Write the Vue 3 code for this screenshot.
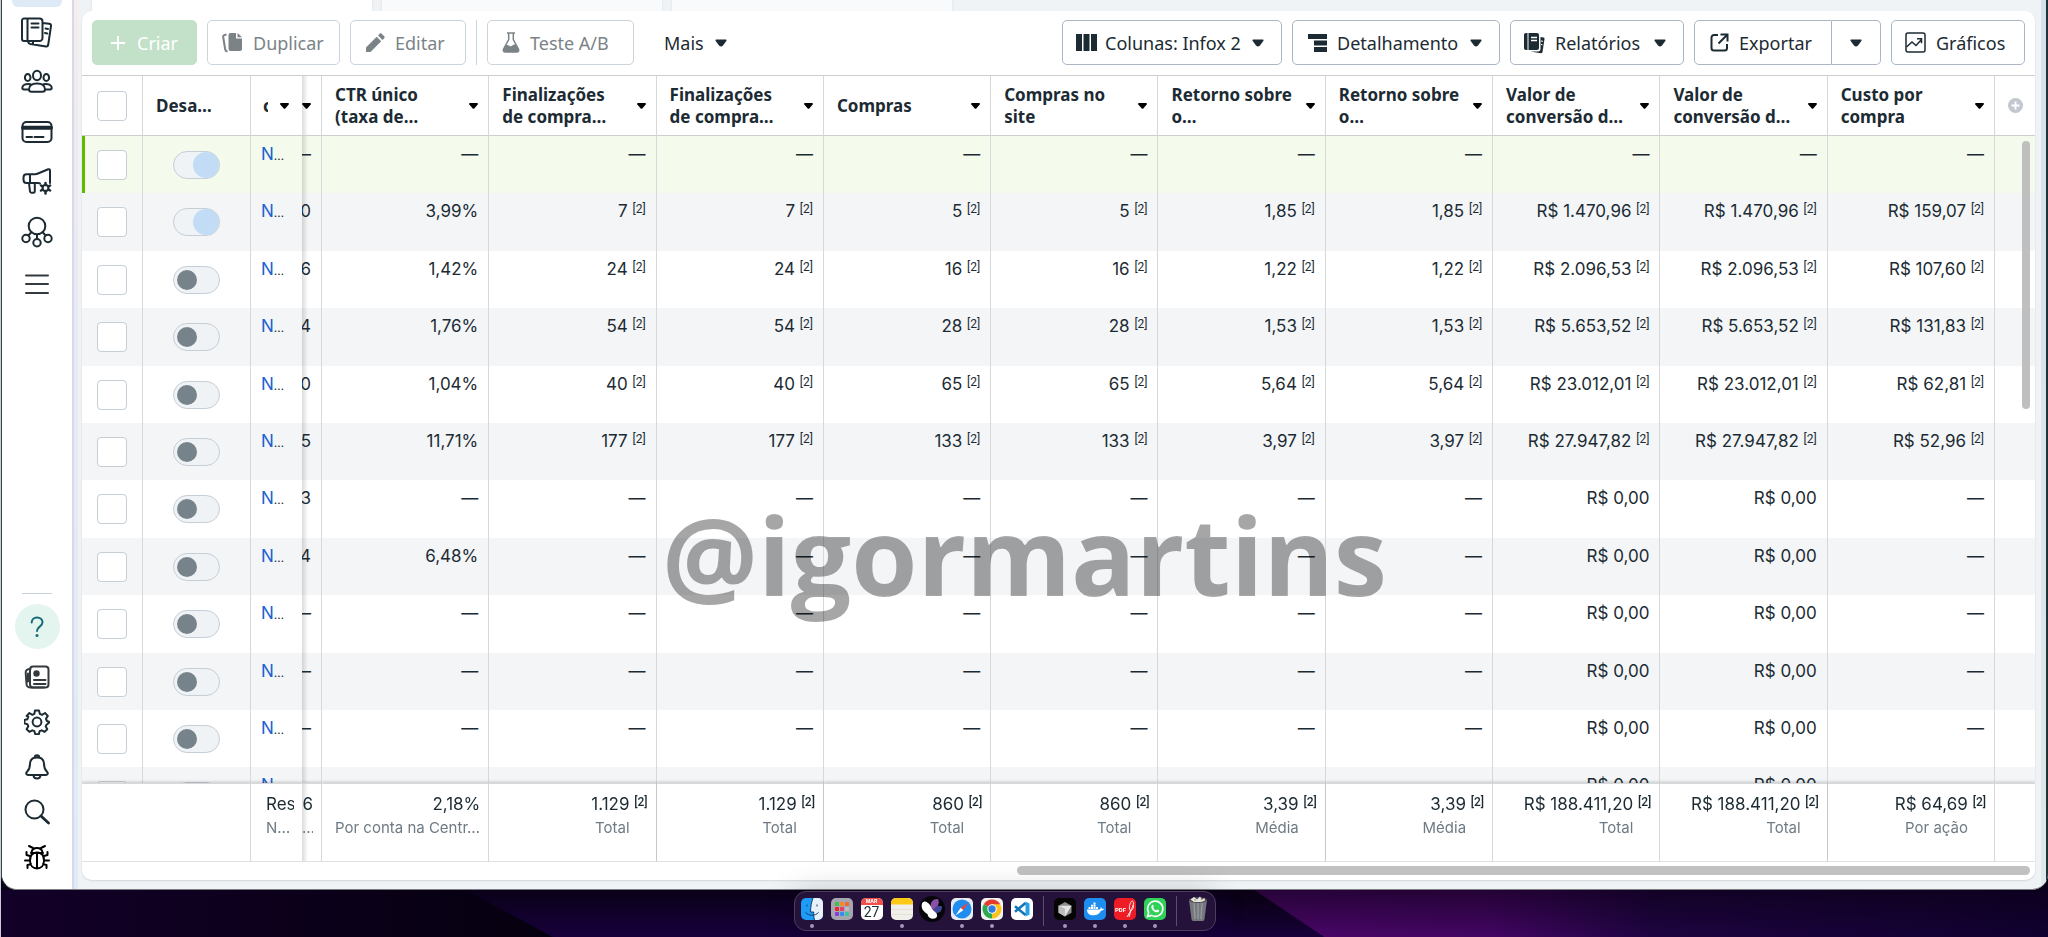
<script setup>
const headers = [
  'CTR único (taxa de…',
  'Finalizações de compra…',
  'Finalizações de compra…',
  'Compras',
  'Compras no site',
  'Retorno sobre o…',
  'Retorno sobre o…',
  'Valor de conversão d…',
  'Valor de conversão d…',
  'Custo por compra',
]

const D = '—'
const row = (on, part, ctr, checkouts, purchases, roas, value, cost) => ({
  on,
  part,
  cells: [ctr, checkouts, checkouts, purchases, purchases, roas, roas, value, value, cost].map(
    (text, i) => ({ text, note: i > 0 && text !== D && text !== 'R$ 0,00' }),
  ),
})

const rows = [
  row(true, D, D, D, D, D, D, D),
  row(true, '0', '3,99%', '7', '5', '1,85', 'R$ 1.470,96', 'R$ 159,07'),
  row(false, '6', '1,42%', '24', '16', '1,22', 'R$ 2.096,53', 'R$ 107,60'),
  row(false, '4', '1,76%', '54', '28', '1,53', 'R$ 5.653,52', 'R$ 131,83'),
  row(false, '0', '1,04%', '40', '65', '5,64', 'R$ 23.012,01', 'R$ 62,81'),
  row(false, '5', '11,71%', '177', '133', '3,97', 'R$ 27.947,82', 'R$ 52,96'),
  row(false, '3', D, D, D, D, 'R$ 0,00', D),
  row(false, '4', '6,48%', D, D, D, 'R$ 0,00', D),
  row(false, D, D, D, D, D, 'R$ 0,00', D),
  row(false, D, D, D, D, D, 'R$ 0,00', D),
  row(false, D, D, D, D, D, 'R$ 0,00', D),
  row(false, D, D, D, D, D, 'R$ 0,00', D),
]

const totals = [
  { text: '1.129', sub: 'Total' },
  { text: '1.129', sub: 'Total' },
  { text: '860', sub: 'Total' },
  { text: '860', sub: 'Total' },
  { text: '3,39', sub: 'Média' },
  { text: '3,39', sub: 'Média' },
  { text: 'R$ 188.411,20', sub: 'Total' },
  { text: 'R$ 188.411,20', sub: 'Total' },
  { text: 'R$ 64,69', sub: 'Por ação' },
]

const padColors = ['#3fbf4a', '#f58a1f', '#f5672a', '#e8262b', '#e83b6b', '#b9bcc2', '#8a3bd6', '#2f8ff0', '#35c6a5']
</script>

<template>
  <div class="desktop">
    <div class="window">
      <aside class="rail">
        <div class="rail-current"></div>
        <nav class="rail-group" aria-label="Atalhos">
          <a href="#" class="rail-link" aria-label="Relatórios">
            <svg width="32" height="32" viewBox="0 0 32 32" class="line">
              <path d="M3 2.500h15.500a3 3 0 0 1 3 3V22a3 3 0 0 1-3 3H3a2 2 0 0 1-2-2V4.500a2 2 0 0 1 2-2zM6.500 2.500V25M10.500 7.500h7M10.500 11.500h7M7 25.500c.3 1.800 1 2.300 2.500 2.600L25 30.500c1.300.2 2-.6 2.200-1.700L30 10c.2-1.300-.5-2-1.800-2.200L22 7M24.500 12.500l2.500.4M24 17l2.300.4M12 25.500v3" />
            </svg>
          </a>
          <a href="#" class="rail-link" aria-label="Públicos">
            <svg width="32" height="32" viewBox="0 0 32 32" class="line">
              <ellipse cx="16" cy="9.500" rx="4" ry="4.800" />
              <ellipse cx="6.700" cy="11.500" rx="2.800" ry="3.500" />
              <ellipse cx="25.300" cy="11.500" rx="2.800" ry="3.500" />
              <path d="M8 23.500c0-4 3.500-6 8-6s8 2 8 6c0 1.500-1 2.200-2.500 2.200h-11C9 25.700 8 25 8 23.500zM9.500 18.200C4.500 17.500 1.300 19 1.300 21.800c0 1.200.8 1.700 1.700 1.700h5M22.500 18.200c5-.7 8.200.8 8.200 3.600 0 1.200-.8 1.700-1.700 1.700h-5" />
            </svg>
          </a>
          <a href="#" class="rail-link" aria-label="Cobrança">
            <svg width="32" height="32" viewBox="0 0 32 32" class="line">
              <rect x="1.500" y="6" width="29" height="20" rx="4" />
              <path d="M2 11.800h28" stroke-width="4" />
              <path d="M5.500 21h5.500M13.500 21h9" />
            </svg>
          </a>
          <a href="#" class="rail-link" aria-label="Configurações de anúncios">
            <svg width="32" height="32" viewBox="0 0 32 32" class="line">
              <path d="M29 17V4.500c0-1-.8-1.600-1.800-1.200L17 7.500C16 8 15 8.200 14 8.200H5.500c-2 0-3 1.500-3 3.300v2c0 2 1 3.500 3 3.500H9v-8.500M9 17h8l2 .5M8 17l1 8.500c.1.800.6 1.200 1.400 1.200h2c1 0 1.400-.6 1.400-1.500V17" />
              <path d="M24.500 17v2M24.500 25v2.500M20 19.500l1.700 1M27.300 23.500l1.800 1M20 24.500l1.700-1M27.300 20.500l1.800-1" stroke-width="2.500" />
              <circle cx="24.500" cy="22" r="3" />
            </svg>
          </a>
          <a href="#" class="rail-link" aria-label="Conexões">
            <svg width="32" height="32" viewBox="0 0 32 32" class="line">
              <circle cx="16" cy="10" r="8.300" />
              <circle cx="5" cy="22.500" r="3.700" />
              <circle cx="27" cy="22.500" r="3.700" />
              <circle cx="16" cy="26.800" r="3.700" />
              <path d="M16 18.500v4.500M10.500 16l-3 3.500M21.500 16l3 3.500" />
            </svg>
          </a>
          <a href="#" class="rail-link menu" aria-label="Todas as ferramentas">
            <svg width="32" height="32" viewBox="0 0 32 32" class="line soft">
              <path d="M5 7.500h22M5 16h22M5 25h22" />
            </svg>
          </a>
        </nav>
        <nav class="rail-group low" aria-label="Ajuda e configurações">
          <a href="#" class="help" aria-label="Ajuda">
            <svg width="24" height="24" viewBox="0 0 24 24" fill="none" stroke="#176b76" stroke-width="2">
              <path d="M6.700 7.500c0-3 2.200-5 5.300-5s5.500 2 5.500 4.800c0 4.500-5.500 4.200-5.500 8.700" stroke-linecap="round" />
              <circle cx="12" cy="20.500" r="1.500" fill="#176b76" stroke="none" />
            </svg>
          </a>
          <a href="#" class="rail-link small" aria-label="Novidades">
            <svg width="26" height="26" viewBox="0 0 26 26" class="line soft">
              <rect x="6" y="2.500" width="18.500" height="21" rx="3" />
              <path d="M6.500 5C3 5 1.500 6.500 1.700 9l.8 11c.2 2.300 1.500 3.500 4 3.500H20M4 9.500v8" />
              <path d="M10 16h11.500M10 20h11.500" />
              <circle cx="12.500" cy="9.500" r="3.200" fill="#333b40" stroke="none" />
            </svg>
          </a>
          <a href="#" class="rail-link small" aria-label="Configurações">
            <svg width="26" height="26" viewBox="0 0 26 26" class="line">
              <circle cx="13" cy="13" r="4.400" />
              <path d="M11 1.500h4l.8 3.300 2.200 1 3-1.800 2.800 2.900-1.800 2.900.9 2.200L25 12.800v.9l-2.500 2-.8 1.500 1.600 3-2.700 2.700-2.900-1.600-2.100.9-.8 3h-3.500l-.9-3-2.100-.9-2.900 1.600-2.800-2.700 1.700-3-.9-2-3-.8v-3.400l3-.8.9-2.300L2.700 6.900 5.400 4l3 1.800 2-1z" />
            </svg>
          </a>
          <a href="#" class="rail-link small" aria-label="Notificações">
            <svg width="26" height="26" viewBox="0 0 26 26" class="line">
              <path d="M10.800 3.500c0-3 4.400-3 4.400 0 3.300 1 4.800 3.500 4.800 6.500 0 4 .7 5.500 3 7.700 1.500 1.500.8 3.300-1.300 3.300H4.300c-2.100 0-2.800-1.800-1.300-3.300C5.300 15.500 6 14 6 10c0-3 1.500-5.500 4.800-6.500zM9.500 21.500c.3 4 6.700 4 7 0M10.800 3.800c1.400-.5 3-.5 4.400 0" />
            </svg>
          </a>
          <a href="#" class="rail-link small" aria-label="Pesquisar">
            <svg width="26" height="26" viewBox="0 0 26 26" class="line">
              <circle cx="10.500" cy="10.500" r="9" />
              <path d="M17 17l7.500 7" stroke-width="2.800" />
            </svg>
          </a>
          <a href="#" class="rail-link small" aria-label="Relatar um problema">
            <svg width="26" height="26" viewBox="0 0 26 26" class="line bug">
              <path d="M13 8.500c4.500 0 7 3 7 8s-3 8-7 8-7-3-7-8 2.500-8 7-8zM13 8.500v16M7.500 8.500c.5-3.500 2.500-4.500 5.500-4.500s5 1 5.500 4.500M7 9h12M9 4L5 2M17 4l4-2M6 12L2.500 11V8M20 12l3.500-1V8M6 16.500H1M20 16.500h5M7 20l-3.500 1v3M19 20l3.500 1v3" />
            </svg>
          </a>
        </nav>
      </aside>
      <div class="edge"></div>

      <main class="content">
        <div class="tabs">
          <div class="tab current"></div>
          <div class="tab"></div>
          <div class="tab"></div>
        </div>

        <section class="panel">
          <div class="toolbar">
            <div class="tools">
              <button type="button" class="btn create">
                <svg width="14" height="14" viewBox="0 0 14 14"><path d="M7 0v14M0 7h14" stroke="#fff" stroke-width="2" /></svg>
                Criar
              </button>
              <button type="button" class="btn faded duplicate">
                <svg width="21" height="21" viewBox="0 0 21 21">
                  <path d="M8.500 1H14v5.500h6V17a2 2 0 0 1-2 2H8.500a2 2 0 0 1-2-2V3a2 2 0 0 1 2-2z" fill="#7b8387" />
                  <path d="M15.500 1L20 5.200h-4.500z" fill="#7b8387" />
                  <path d="M4.500 2.500L2.500 3c-1 .3-1.500 1-1.300 2l2 12.500c.2 1.300.8 1.800 2.300 2" fill="none" stroke="#7b8387" stroke-width="2" />
                </svg>
                Duplicar
              </button>
              <button type="button" class="btn faded edit">
                <svg width="20" height="20" viewBox="0 0 20 20">
                  <path d="M1 14.500L11.700 3.800l4.500 4.500L5.500 19H1zM13 2.500l1.700-1.700c.7-.6 1.300-.6 2 0l2.500 2.500c.6.700.6 1.300 0 2L17.500 7z" fill="#7b8387" />
                </svg>
                Editar
              </button>
              <span class="rule"></span>
              <button type="button" class="btn faded test">
                <svg width="18" height="21" viewBox="0 0 18 21">
                  <path d="M5 1h8M6.700 1v6.500L1.600 17c-.7 1.500 0 3 1.700 3h11.400c1.700 0 2.400-1.500 1.700-3L11.300 7.500V1" fill="none" stroke="#7b8387" stroke-width="1.500" />
                  <path d="M3.500 13.500c3-1.500 4 1.500 6 .5s3-2 4.500-1.500l2.500 5c.5 1.500-.3 2.500-1.700 2.500H3.200c-1.400 0-2.200-1-1.700-2.500z" fill="#7b8387" />
                </svg>
                Teste A/B
              </button>
              <button type="button" class="btn plain">
                Mais
                <svg class="caret" width="12" height="8" viewBox="0 0 12 8"><path d="M1.200.5h9.600q1.200 0 .5 1.400L8 6.500Q6 8.300 4 6.500L.7 1.900Q0 .5 1.200.5z" /></svg>
              </button>
            </div>
            <div class="tools">
              <button type="button" class="btn columns">
                <svg width="21" height="17" viewBox="0 0 21 17" fill="#1c2b33">
                  <rect x="0" y="0" width="6" height="17" /><rect x="7.500" y="0" width="6" height="17" /><rect x="15" y="0" width="6" height="17" />
                </svg>
                Colunas: Infox 2
                <svg class="caret" width="12" height="8" viewBox="0 0 12 8"><path d="M1.200.5h9.600q1.200 0 .5 1.400L8 6.500Q6 8.300 4 6.500L.7 1.900Q0 .5 1.200.5z" /></svg>
              </button>
              <button type="button" class="btn breakdown">
                <svg width="19" height="18" viewBox="0 0 19 18" fill="#1c2b33">
                  <rect x="0" y="0" width="19" height="5" /><rect x="6" y="6.500" width="13" height="5" /><rect x="6" y="13" width="13" height="5" />
                </svg>
                Detalhamento
                <svg class="caret" width="12" height="8" viewBox="0 0 12 8"><path d="M1.200.5h9.600q1.200 0 .5 1.400L8 6.500Q6 8.300 4 6.500L.7 1.900Q0 .5 1.200.5z" /></svg>
              </button>
              <button type="button" class="btn reports">
                <svg width="21" height="22" viewBox="0 0 21 22" fill="#1c2b33">
                  <path d="M2 1h1.500v17H2c-1.300 0-2-.8-2-2V3c0-1.200.7-2 2-2zM4.500 1H13a2 2 0 0 1 2 2v13a2 2 0 0 1-2 2H4.500zM16.500 5l3 .5c.8.200 1.200.8 1 1.600l-2 13c-.1.800-.8 1.300-1.700 1.100L6.500 19.500H14c1.600 0 2.500-1 2.500-2.500z" />
                  <path d="M7 5.500h6M7 8.500h6" stroke="#fff" stroke-width="1.300" />
                  <path d="M17 9l2 .3M17 12.500l1.500.3" stroke="#fff" stroke-width="1" />
                </svg>
                Relatórios
                <svg class="caret" width="12" height="8" viewBox="0 0 12 8"><path d="M1.200.5h9.600q1.200 0 .5 1.400L8 6.500Q6 8.300 4 6.500L.7 1.900Q0 .5 1.200.5z" /></svg>
              </button>
              <div class="split">
                <button type="button" class="btn export">
                  <svg width="19" height="19" viewBox="0 0 19 19" fill="none" stroke="#1c2b33" stroke-width="2">
                    <path d="M8 2H4a2.500 2.500 0 0 0-2.500 2.500V15A2.500 2.500 0 0 0 4 17.500h10.500A2.500 2.500 0 0 0 17 15v-4M10.500 1.500H17.500V8.500M17 2L8.500 10.500" />
                  </svg>
                  Exportar
                </button>
                <button type="button" class="btn more" aria-label="Mais opções de exportação">
                  <svg class="caret" width="12" height="8" viewBox="0 0 12 8"><path d="M1.200.5h9.600q1.200 0 .5 1.400L8 6.500Q6 8.300 4 6.500L.7 1.900Q0 .5 1.200.5z" /></svg>
                </button>
              </div>
              <button type="button" class="btn chart">
                <svg width="21" height="21" viewBox="0 0 21 21" fill="none" stroke="#1c2b33" stroke-width="1.500">
                  <rect x="1" y="1" width="19" height="19" rx="2" />
                  <path d="M1.500 15l5.500-5 4 3.500 5.500-6M12 6.700h4.500v4.500" />
                </svg>
                Gráficos
              </button>
            </div>
          </div>

          <div class="viewport">
            <table class="grid">
              <colgroup>
                <col class="w-check" /><col class="w-switch" /><col class="w-name" /><col class="w-part" />
                <col v-for="(h, i) in headers" :key="i" />
                <col class="w-add" />
              </colgroup>
              <thead>
                <tr>
                  <th class="center"><input type="checkbox" class="check" aria-label="Selecionar tudo" /></th>
                  <th class="state">Desa…</th>
                  <th class="name-head">
                    <div><span>c</span><button type="button" class="sort" aria-label="Ordenar por nome"><svg width="9" height="6" viewBox="0 0 9 6"><path d="M.7 0h7.600q1 .6.4 1.400L5.500 5.300q-1 1-2 0L.3 1.400Q-.3.600.7 0z" /></svg></button></div>
                  </th>
                  <th class="part-head">
                    <button type="button" class="sort" aria-label="Ordenar"><svg width="9" height="6" viewBox="0 0 9 6"><path d="M.7 0h7.600q1 .6.4 1.400L5.500 5.300q-1 1-2 0L.3 1.400Q-.3.600.7 0z" /></svg></button>
                  </th>
                  <th v-for="(h, i) in headers" :key="i">
                    <div class="head">
                      <span>{{ h }}</span>
                      <button type="button" class="sort" :aria-label="'Ordenar por ' + h"><svg width="9" height="6" viewBox="0 0 9 6"><path d="M.7 0h7.600q1 .6.4 1.400L5.500 5.300q-1 1-2 0L.3 1.400Q-.3.600.7 0z" /></svg></button>
                    </div>
                  </th>
                  <th class="center">
                    <button type="button" class="sort" aria-label="Adicionar coluna">
                      <svg width="15" height="15" viewBox="0 0 15 15"><circle cx="7.500" cy="7.500" r="7.500" fill="#c3c7cf" /><path d="M7.500 3.500v8M3.500 7.500h8" stroke="#fff" stroke-width="1.800" /></svg>
                    </button>
                  </th>
                </tr>
              </thead>
              <tbody>
                <tr v-for="(r, n) in rows" :key="n">
                  <td class="center"><input type="checkbox" class="check" :aria-label="'Selecionar linha ' + (n + 1)" /></td>
                  <td class="center"><input type="checkbox" role="switch" class="switch" :checked="r.on" :aria-label="'Ativar linha ' + (n + 1)" /></td>
                  <td class="name"><a href="#">N</a><span>…</span></td>
                  <td class="part"><div>{{ r.part }}</div></td>
                  <td v-for="(c, i) in r.cells" :key="i" class="num">{{ c.text }} <sup v-if="c.note">[2]</sup></td>
                  <td></td>
                </tr>
              </tbody>
              <tfoot>
                <tr>
                  <td colspan="2"></td>
                  <td class="sum-name"><div>Resultados</div><small>N…</small></td>
                  <td class="sum-part"><div>6</div><small>…</small></td>
                  <td class="sum ctr"><div>2,18%</div><small>Por conta na Centr…</small></td>
                  <td v-for="(t, i) in totals" :key="i" class="sum"><div>{{ t.text }} <sup>[2]</sup></div><small>{{ t.sub }}</small></td>
                  <td></td>
                </tr>
              </tfoot>
            </table>
            <div class="thumb-y"></div>
          </div>
          <div class="track-x"><div class="thumb-x"></div></div>
        </section>
      </main>
      <div class="far-edge"></div>
    </div>

    <div class="wallpaper">
      <svg class="aurora" viewBox="0 0 2048 47" preserveAspectRatio="none" aria-hidden="true">
        <defs>
          <linearGradient id="night" x1="0" y1="0" x2="0" y2="1"><stop offset="0" stop-color="#0a0118" /><stop offset="1" stop-color="#17003c" /></linearGradient>
          <linearGradient id="dusk" x1="0" y1="0" x2="1" y2="0"><stop offset="0" stop-color="#130028" /><stop offset="1" stop-color="#05000f" /></linearGradient>
          <linearGradient id="glow" x1="0" y1="0" x2="1" y2="0"><stop offset="0" stop-color="#4b0669" /><stop offset=".3" stop-color="#430563" /><stop offset=".5" stop-color="#1e0441" /><stop offset="1" stop-color="#100030" /></linearGradient>
          <linearGradient id="shade" x1="0" y1="0" x2="0" y2="1"><stop offset="0" stop-color="#0a0010" stop-opacity=".55" /><stop offset="1" stop-color="#0a0010" stop-opacity="0" /></linearGradient>
        </defs>
        <rect width="2048" height="47" fill="url(#night)" />
        <path d="M0 0h465l87 47H0z" fill="url(#dusk)" />
        <path d="M1254 0h794v47H1324z" fill="url(#glow)" />
        <rect x="1230" width="818" height="47" fill="url(#shade)" />
      </svg>
      <div class="dock">
        <div class="app running">
          <svg width="22" height="22" viewBox="0 0 22 22"><rect width="22" height="22" rx="5" fill="#1d9bf6" /><path d="M12 0h5a5 5 0 0 1 5 5v12a5 5 0 0 1-5 5h-3.500c-.8-3-1-5.500-.8-8H9.500C9.700 8 10.500 4 12 0z" fill="#e8f0f8" /><path d="M6 6.500v2M16 6.500v2M4.500 14.500c3.500 3.700 9.500 3.700 13 0M12 0c-1.500 4-2.300 8-2.500 14h3.200c-.2 2.500 0 5 .8 8" fill="none" stroke="#12436f" stroke-width="1" /></svg>
        </div>
        <div class="app">
          <svg width="22" height="22" viewBox="0 0 22 22"><rect width="22" height="22" rx="5" fill="#a7a6b0" /><rect v-for="(c, i) in padColors" :key="i" :x="4 + (i % 3) * 5" :y="4 + Math.floor(i / 3) * 5" width="4" height="4" rx="1" :fill="c" /></svg>
        </div>
        <div class="app">
          <div class="calendar"><span>MAR</span><b>27</b></div>
        </div>
        <div class="app running">
          <svg width="22" height="22" viewBox="0 0 22 22"><rect width="22" height="22" rx="5" fill="#f1efe9" /><path d="M0 6.500V5a5 5 0 0 1 5-5h12a5 5 0 0 1 5 5v1.500z" fill="#fcc916" /><path d="M0 11.500h22M0 16.500h22" stroke="#dcdad2" stroke-width=".7" /></svg>
        </div>
        <div class="app">
          <svg width="26" height="26" viewBox="0 0 26 26"><circle cx="13" cy="13" r="13" fill="#06060a" /><path d="M12.500 13C10 7 13.500 2.500 19 3c2 4.500 0 8.500-5.500 11z" fill="#8a4fa6" /><path d="M14 16.500c0-4.500 4-7.500 9-6 .5 4.500-3.500 8-9 6z" fill="#41469a" /><path d="M3 7.500C6 2.500 11 7.500 13.200 13.200 15 15.500 19 17 18 20.500c-1.500 3.500-9 3-9.500-2.500C5 16 1.500 12.500 3 7.500z" fill="#fff" /></svg>
        </div>
        <div class="app running">
          <svg width="22" height="22" viewBox="0 0 22 22"><rect width="22" height="22" rx="5" fill="#e9edf1" /><circle cx="11" cy="11" r="9.500" fill="#1f8df0" /><path d="M17.500 4.500L12.300 12.300 9.700 9.700z" fill="#f04438" /><path d="M4.500 17.500l5.200-7.800 2.600 2.600z" fill="#fff" /></svg>
        </div>
        <div class="app running">
          <svg width="22" height="22" viewBox="0 0 22 22"><rect width="22" height="22" rx="5" fill="#f3f3f3" /><path d="M11 11L2.800 6.300A9.400 9.400 0 0 1 19.200 6.300z" fill="#e33b2e" /><path d="M11 11L2.800 6.300a9.400 9.400 0 0 0 8.200 14.100z" fill="#2da94f" /><path d="M11 11h0l0 9.400A9.400 9.400 0 0 0 19.200 6.300H11z" fill="#fcc31e" /><circle cx="11" cy="11" r="4.700" fill="#fff" /><circle cx="11" cy="11" r="3.700" fill="#2f7de1" /></svg>
        </div>
        <div class="app">
          <svg width="22" height="22" viewBox="0 0 22 22"><rect width="22" height="22" rx="5" fill="#fff" /><path d="M14.500 3.500l4 2v11l-4 2z" fill="#27a0e8" /><path d="M14.500 5L4 13.700M14.500 17L4 8.300" stroke="#1274b8" stroke-width="2.500" /></svg>
        </div>
        <span class="dock-rule"></span>
        <div class="app running">
          <svg width="22" height="22" viewBox="0 0 22 22"><rect width="22" height="22" rx="5" fill="#050505" /><path d="M11 4l6.500 3.700v7L11 18.500l-6.500-3.800v-7z" fill="#8d8d8d" /><path d="M4.500 7.700h13L11 18.500V11z" fill="#e5e5e5" /><path d="M4.500 7.700L11 11v7.500l-6.500-3.800z" fill="#bdbdbd" /></svg>
        </div>
        <div class="app running">
          <svg width="22" height="22" viewBox="0 0 22 22"><rect width="22" height="22" rx="5" fill="#1d8df0" /><path d="M3 11.500h12.500c1-.1 1.300-1 1-2.500 1 .5 1.300 1 1.500 1.700.8-.1 1.300 0 2 .3-.5 1.200-1.500 1.700-3 1.700-1.500 3.300-4 4.600-7.500 4.600-4.300 0-6.500-2-6.500-5.800zM4.500 9h2v2h-2zM7 9h2v2H7zM9.500 9h2v2h-2zM12 9h2v2h-2zM7 6.700h2v2H7zM9.500 6.700h2v2h-2zM9.500 4.500h2v2h-2z" fill="#fff" /></svg>
        </div>
        <div class="app running">
          <div class="pdf">PDF<svg width="8" height="18" viewBox="0 0 8 18"><path d="M1 17C4 12 9 4 7 1.500S2 8 4 10s4-3 3.500-5M3 17l2-7" fill="none" stroke="#fff" stroke-width=".9" /></svg></div>
        </div>
        <div class="app running">
          <svg width="22" height="22" viewBox="0 0 22 22"><rect width="22" height="22" rx="5" fill="#2fd158" /><path d="M3.500 18.500l1.100-4A7.600 7.600 0 1 1 7.500 17.400z" fill="none" stroke="#fff" stroke-width="1.600" /><path d="M8 7.200c.8-.8 1.300-.3 1.700 1 .3.800-.8 1-.4 1.700.7 1.200 1.500 1.900 2.700 2.400.7.300.9-1 1.600-.8 1.500.6 1.900 1 1.300 1.900-1 1.300-2.700 1.200-4.700 0C8 12 6.500 9 8 7.200z" fill="#fff" /></svg>
        </div>
        <span class="dock-rule"></span>
        <div class="app">
          <svg width="20" height="26" viewBox="0 0 20 26"><path d="M1 4h18l-2.500 19c-.2 1.500-1 2-2.500 2H6c-1.500 0-2.300-.5-2.500-2z" fill="#74787c" /><path d="M6 7l1 16M10 7v16M14 7l-1 16" stroke="#989ca0" stroke-width="1.300" /><ellipse cx="10" cy="4" rx="9" ry="3" fill="#4c4f53" /><path d="M2.500 3.500L6 1l3 2.500L12 .5l2 3 2.500-1.500.5 2.500-4 1.500H6z" fill="#e6e6e6" /><path d="M6 3.500l2 1M12.500 4l2-1" stroke="#d98a3a" /></svg>
        </div>
      </div>
    </div>
    <div class="watermark">@igormartins</div>
  </div>
</template>

<style>
body {
  margin: 0;
  overflow: hidden;
}
</style>

<style scoped>
* {
  box-sizing: border-box;
}
.desktop {
  position: relative;
  display: flex;
  flex-direction: column;
  height: 100vh;
  background: #0a0118;
  color: #1c2b33;
  font-family: Inter, Roboto, sans-serif;
  font-size: 17px;
  border-left: 1px solid #c9cdd1;
}
svg {
  display: block;
  flex: none;
}
.window {
  display: flex;
  flex: 1;
  min-height: 0;
  border-left: 1px solid #38444c;
  border-bottom: 1px solid #7c7f82;
  border-radius: 0 0 16px 16px;
  overflow: hidden;
  background: #eff3f6;
}
.rail {
  display: flex;
  flex-direction: column;
  align-items: center;
  width: 70px;
  flex: none;
  background: #fff;
  padding-bottom: 10px;
}
.rail-current {
  width: 50px;
  height: 7px;
  border-radius: 0 0 6px 6px;
  background: #deebf7;
}
.rail-group {
  display: flex;
  flex-direction: column;
  align-items: center;
}
.rail-link {
  display: grid;
  place-items: center;
  width: 50px;
  height: 50px;
}
.rail-link.menu {
  height: 54px;
}
.rail-link.small {
  height: 45px;
}
.low {
  margin-top: auto;
  border-top: 1px solid #c5d0db;
  padding-top: 10px;
  width: 30px;
}
.help {
  display: grid;
  place-items: center;
  width: 45px;
  height: 45px;
  margin-bottom: 5px;
  border-radius: 50%;
  background: #e4f4ef;
}
.line {
  fill: none;
  stroke: #1c2b33;
  stroke-width: 2;
  stroke-linecap: round;
  stroke-linejoin: round;
}
.line.soft {
  stroke: #333b40;
}
.line.bug {
  stroke: #000;
}
.edge {
  width: 6px;
  flex: none;
  border-left: 2px solid #d3dbe6;
  background: linear-gradient(#f8ebeb, #ebe8f4 30%, #e0ebf7);
}
.far-edge {
  width: 7px;
  flex: none;
  border-right: 2px solid #1f333b;
  background: linear-gradient(#d5e1ea, #dce9e8);
}
.content {
  display: flex;
  flex-direction: column;
  flex: 1;
  min-width: 0;
  padding: 0 6px 9px 4px;
}
.tabs {
  display: flex;
  gap: 10px;
  height: 11px;
  flex: none;
  padding-left: 10px;
}
.tab {
  width: 280px;
  background: #f9fafc;
  box-shadow: 0 0 3px rgba(0, 0, 0, .08);
}
.tab.current {
  background: #fff;
}
.panel {
  position: relative;
  display: flex;
  flex-direction: column;
  flex: 1;
  min-height: 0;
  background: #fff;
  border-radius: 10px;
  box-shadow: 0 1px 2px rgba(0, 0, 0, .12);
}
.toolbar {
  display: flex;
  justify-content: space-between;
  padding: 9px 10px 10px;
  border-bottom: 1px solid #cccfd2;
  font-family: "Noto Sans", "Open Sans", sans-serif;
}
.tools {
  display: flex;
  gap: 10px;
}
.btn {
  display: flex;
  align-items: center;
  gap: 10px;
  height: 45px;
  padding: 0 17px 0 13px;
  border: 1px solid #a9b6c4;
  border-radius: 5px;
  background: #fff;
  color: #1c2b33;
  font-family: inherit;
  font-size: 18px;
  white-space: nowrap;
}
.caret {
  margin-left: auto;
  fill: #1c2b33;
}
.btn.faded {
  padding: 0 0 0 14px;
  border-color: #cbd3db;
  color: #7b8387;
}
.btn.create {
  gap: 12px;
  width: 105px;
  padding: 0 0 0 18px;
  border-color: #c3e1c9;
  background: #c3e1c9;
  color: #fff;
}
.btn.duplicate {
  width: 133px;
}
.btn.edit {
  width: 116px;
}
.btn.test {
  width: 147px;
}
.btn.columns {
  gap: 8px;
  width: 220px;
}
.btn.breakdown {
  width: 208px;
  padding-left: 15px;
}
.btn.reports {
  width: 174px;
}
.btn.export {
  width: 138px;
  padding-right: 0;
}
.btn.chart {
  width: 134px;
  padding-right: 0;
}
.btn.plain {
  width: 84px;
  border-color: transparent;
  padding-left: 19px;
  padding-right: 0;
}
.rule {
  width: 1px;
  background: #cbd3db;
}
.split {
  display: flex;
}
.split .export {
  padding-left: 15px;
  border-radius: 5px 0 0 5px;
}
.split .more {
  border-left: 0;
  border-radius: 0 5px 5px 0;
  padding: 0 18px;
}
.viewport {
  position: relative;
  flex: 1;
  min-height: 0;
  overflow: hidden;
}
.grid {
  width: 100%;
  table-layout: fixed;
  border-collapse: separate;
  border-spacing: 0;
}
.w-check { width: 61px; }
.w-switch { width: 108px; }
.w-name { width: 51px; }
.w-part { width: 20px; }
.w-add { width: 40px; }
th,
td {
  padding: 0;
  border-right: 1px solid #d6d8da;
  text-align: left;
  overflow: hidden;
}
th:last-child,
td:last-child {
  border-right: 0;
}
th {
  height: 60px;
  border-bottom: 1px solid #cccfd2;
  font-family: "Noto Sans", "Open Sans", sans-serif;
  line-height: 22px;
  font-weight: 700;
}
tbody td {
  height: 57px;
  vertical-align: top;
  line-height: 24px;
  padding-top: 6px;
}
tbody tr:nth-child(5n + 2) td,
tbody tr:nth-child(5n + 4) td {
  height: 58px;
}
tbody tr:nth-child(even) td {
  background-color: #f3f5f7;
}
tbody tr:first-child td {
  background-color: #f4faec;
}
tbody tr:first-child td:first-child {
  box-shadow: inset 3px 0 #5fba00;
}
.center,
tbody .center {
  padding: 0;
  text-align: center;
  vertical-align: middle;
}
.check {
  appearance: none;
  display: block;
  width: 30px;
  height: 30px;
  margin: 0 auto;
  border: 1px solid #c6ced6;
  border-radius: 4px;
  background: #fff;
}
.switch {
  appearance: none;
  display: flex;
  align-items: center;
  width: 47px;
  height: 28px;
  margin: 0 auto;
  padding: 0 3px;
  border: 1px solid #c6ced6;
  border-radius: 14px;
  background: #eff3f6;
}
.switch::before {
  content: "";
  width: 20px;
  height: 20px;
  border-radius: 50%;
  background: #77838b;
}
.switch:checked {
  justify-content: flex-end;
  padding: 0;
}
.switch:checked::before {
  width: 26px;
  height: 26px;
  background: #c3dcf5;
}
.state {
  padding-left: 13px;
}
.sort {
  flex: none;
  display: block;
  padding: 0;
  border: 0;
  background: none;
}
.center .sort {
  margin: 0 auto;
}
.head {
  display: flex;
  align-items: center;
  justify-content: space-between;
  padding: 0 10px 0 13px;
}
.head span {
  max-width: 122px;
}
.name-head,
.name,
.sum-name {
  border-right: 0;
}
.name-head div {
  display: flex;
  align-items: center;
  gap: 12px;
  padding-left: 12px;
}
.name-head span {
  width: 5px;
  overflow: hidden;
}
.name {
  padding-left: 10px;
  white-space: nowrap;
}
.name a {
  color: #1a62d0;
  text-decoration: none;
}
.name span {
  font-size: 12px;
}
.part-head,
.part,
.sum-part {
  background-image: linear-gradient(90deg, rgba(0, 0, 0, .14), transparent 6px);
}
.part-head {
  vertical-align: middle;
}
.part div {
  display: flex;
  justify-content: flex-end;
  padding-right: 10px;
  margin-left: -12px;
}
.num {
  text-align: right;
  white-space: nowrap;
  padding-right: 10px;
}
sup {
  font-family: Roboto, sans-serif;
  font-size: 12px;
  line-height: 12px;
  vertical-align: 4px;
}
tfoot sup {
  font-weight: 500;
}
tfoot td {
  position: sticky;
  bottom: 0;
  height: 79px;
  padding-top: 8px;
  border-top: 1px solid #d6d8da;
  border-bottom: 1px solid #dfe1e3;
  background-color: #fff;
  vertical-align: top;
  line-height: 24px;
  box-shadow: 0 -1px 3px rgba(0, 0, 0, .2);
  clip-path: inset(-4px 0 0 0);
  white-space: nowrap;
}
small {
  display: block;
  font-size: 15px;
  color: #6f7b84;
  overflow: hidden;
}
.sum {
  padding-right: 8px;
  text-align: right;
}
.sum small {
  padding-right: 18px;
}
.sum.ctr small {
  padding: 0;
  margin-left: 13px;
  text-align: left;
}
.sum-name {
  padding-left: 15px;
  padding-right: 8px;
}
.sum-name div {
  overflow: hidden;
}
.sum-part {
  padding-right: 8px;
  text-align: right;
}
.thumb-y {
  position: absolute;
  top: 65px;
  right: 5px;
  width: 8px;
  height: 268px;
  border-radius: 4px;
  background: #bfbfbf;
}
.track-x {
  display: flex;
  justify-content: flex-end;
  height: 18px;
  padding: 4px 5px 0;
}
.thumb-x {
  width: calc(52% + 3px);
  height: 9px;
  border-radius: 5px;
  background: #c1c1c1;
}
.wallpaper {
  position: relative;
  display: flex;
  justify-content: center;
  height: 47px;
  flex: none;
  padding-top: 1px;
}
.aurora {
  position: absolute;
  inset: 0;
  width: 100%;
  height: 100%;
}
.dock {
  position: relative;
  display: flex;
  height: 40px;
  margin-right: 40px;
  padding: 0 2px;
  border: 1px solid #4c3d5c;
  border-radius: 12px;
  background: #24123a;
  box-shadow: 0 0 30px rgba(0, 0, 0, .18);
}
.app {
  position: relative;
  display: grid;
  place-items: center;
  width: 30px;
  height: 34px;
}
.running::after {
  content: "";
  position: absolute;
  left: 13px;
  bottom: -2px;
  width: 4px;
  height: 4px;
  border-radius: 50%;
  background: #a596b5;
}
.dock-rule {
  width: 1px;
  margin: 4px 6px;
  background: #5d4e6d;
}
.calendar,
.pdf {
  width: 22px;
  height: 22px;
  border-radius: 5px;
  background: #fff;
  overflow: hidden;
  text-align: center;
}
.calendar span {
  display: block;
  height: 7px;
  background: #f0504a;
  color: #fff;
  font-size: 5px;
  line-height: 7px;
  font-weight: 700;
}
.calendar b {
  display: block;
  font-family: Roboto, sans-serif;
  font-size: 14px;
  line-height: 15px;
  font-weight: 400;
}
.pdf {
  display: flex;
  align-items: center;
  justify-content: center;
  background: #ee1c25;
  color: #fff;
  font-family: Roboto, sans-serif;
  font-size: 6px;
  font-weight: 700;
}
.watermark {
  position: absolute;
  left: 0;
  right: 0;
  top: 482px;
  text-align: center;
  font-family: "Open Sans", "Noto Sans", sans-serif;
  font-size: 107px;
  line-height: 146px;
  font-weight: 700;
  color: rgba(0, 0, 0, .35);
  pointer-events: none;
}
</style>
